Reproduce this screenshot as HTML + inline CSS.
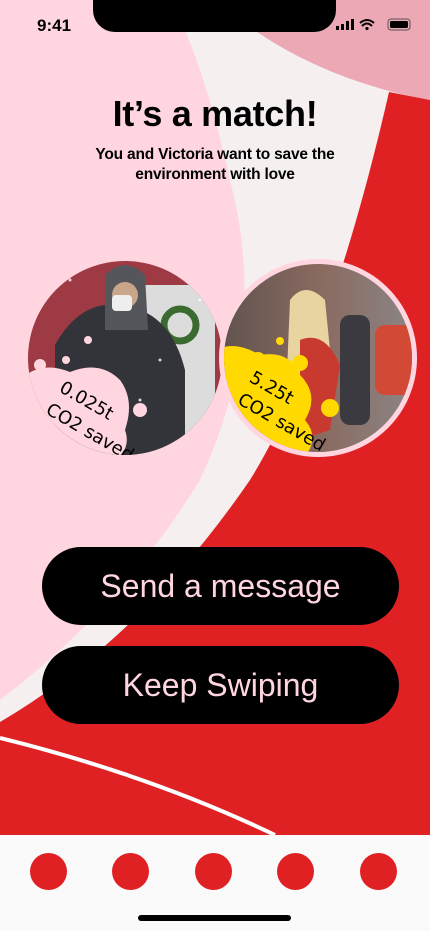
<!DOCTYPE html>
<html><head><meta charset="utf-8"><style>
*{margin:0;padding:0;box-sizing:border-box}
body{width:430px;height:931px;overflow:hidden;position:relative;background:#ffd6e0;font-family:"Liberation Sans",sans-serif}
.abs{position:absolute}
h1{position:absolute;top:93px;width:430px;text-align:center;font-size:36px;font-weight:bold;letter-spacing:-0.3px;color:#000}
.sub{position:absolute;top:145px;width:430px;text-align:center;font-size:15.5px;line-height:20px;color:#000;font-weight:bold;letter-spacing:-0.2px}
.btn{position:absolute;left:42px;width:357px;height:78px;border-radius:39px;background:#000;color:#ffd6e0;font-size:32px;text-align:center;line-height:78px}
.dot{position:absolute;top:853px;width:37px;height:37px;border-radius:50%;background:#e02124}
</style></head><body>
<svg class="abs" style="left:0;top:0" width="430" height="931">
<path d="M185 0 L430 0 L430 931 L0 931 L0 700 Q120 610 200 480 Q270 330 230 180 Q210 90 185 30 Z" fill="#f5f0ef"/>
<path d="M240 20 Q320 80 430 100 L430 0 L240 0 Z" fill="#eda8b5"/>
<path d="M389 92 L430 100 L430 931 L0 931 L0 722 Q140 640 250 480 Q330 350 389 92 Z" fill="#e02124"/>
<path d="M0 738 Q150 775 275 835" stroke="#fff" stroke-width="4" fill="none"/>
<defs>
<linearGradient id="g2" x1="0" x2="1"><stop offset="0" stop-color="#5b504c"/><stop offset="0.5" stop-color="#8a6a60"/><stop offset="1" stop-color="#8a8a8c"/></linearGradient>
<clipPath id="c1"><circle cx="125" cy="358" r="97"/></clipPath>
<clipPath id="c2"><circle cx="318" cy="358" r="94"/></clipPath>
</defs>
<circle cx="125" cy="358" r="102" fill="#ffd6e0"/>
<g clip-path="url(#c1)"><rect x="0" y="250" width="250" height="220" fill="#9e3a44"/>
<rect x="145" y="285" width="70" height="170" fill="#dcdcdc"/>
<circle cx="180" cy="325" r="16" fill="none" stroke="#3a6a30" stroke-width="7"/>
<path d="M55 345 Q80 300 120 305 Q170 310 185 370 L185 460 L55 460 Z" fill="#33343a"/>
<path d="M105 275 Q125 255 145 275 L148 330 L105 330 Z" fill="#55565c"/>
<circle cx="125" cy="295" r="13" fill="#c9a58a"/>
<rect x="112" y="295" width="20" height="16" rx="4" fill="#eee"/>
<g fill="#fff" opacity="0.8"><circle cx="40" cy="300" r="1.5"/><circle cx="70" cy="280" r="1.5"/><circle cx="90" cy="340" r="1.5"/><circle cx="160" cy="360" r="1.5"/><circle cx="200" cy="300" r="1.5"/><circle cx="140" cy="400" r="1.5"/></g>
<path d="M20 380 Q40 360 70 372 Q100 360 120 380 Q135 400 125 430 Q132 450 112 462 L20 462 Z" fill="#ffd6e0"/>
<circle cx="40" cy="365" r="6" fill="#ffd6e0"/><circle cx="66" cy="360" r="4" fill="#ffd6e0"/><circle cx="140" cy="410" r="7" fill="#ffd6e0"/><circle cx="88" cy="340" r="4" fill="#ffd6e0"/>
<text x="58" y="392" font-size="18" transform="rotate(30 60 392)" font-family="DejaVu Sans">0.025t</text>
<text x="44" y="416" font-size="18" transform="rotate(30 50 416)" font-family="DejaVu Sans">CO2 saved</text>
</g>
<circle cx="318" cy="358" r="99" fill="#ffd6e0"/>
<g clip-path="url(#c2)"><rect x="210" y="250" width="220" height="220" fill="url(#g2)"/>
<rect x="375" y="325" width="40" height="70" rx="10" fill="#d24a35"/>
<rect x="340" y="315" width="30" height="110" rx="10" fill="#3a3a40"/>
<path d="M290 300 Q305 280 325 300 L335 400 L285 420 Z" fill="#e8d4a0"/>
<path d="M300 340 Q325 330 340 365 L330 430 L300 440 Z" fill="#c83a30"/>
<path d="M215 350 Q235 340 260 355 Q290 350 300 375 Q320 395 305 420 Q322 440 300 462 L215 462 Z" fill="#ffd900"/>
<circle cx="258" cy="360" r="8" fill="#ffd900"/><circle cx="300" cy="363" r="8" fill="#ffd900"/><circle cx="280" cy="341" r="4" fill="#ffd900"/><circle cx="330" cy="408" r="9" fill="#ffd900"/>
<text x="248" y="382" font-size="18" transform="rotate(30 250 382)" font-family="DejaVu Sans">5.25t</text>
<text x="236" y="405" font-size="18" transform="rotate(30 240 405)" font-family="DejaVu Sans">CO2 saved</text>
</g>
</svg>
<div class="abs" style="left:93px;top:0;width:243px;height:32px;background:#000;border-radius:0 0 22px 22px"></div>
<div class="abs" style="left:37px;top:16px;font-size:17px;font-weight:bold">9:41</div>
<svg class="abs" style="left:336px;top:18px" width="78" height="14">
<rect x="0" y="8" width="3" height="4" fill="#000"/><rect x="5" y="6" width="3" height="6" fill="#000"/><rect x="10" y="3" width="3" height="9" fill="#000"/><rect x="15" y="1" width="3" height="11" fill="#000"/>
<path d="M24 5 Q31 -1 38 5 M26 8 Q31 3 36 8" stroke="#000" stroke-width="2" fill="none"/><circle cx="31" cy="10.5" r="1.6" fill="#000"/>
<rect x="52" y="1" width="22" height="11" rx="3" fill="none" stroke="#555" stroke-width="1"/><rect x="54" y="3" width="18" height="7" rx="1.5" fill="#000"/>
</svg>
<h1>It’s a match!</h1>
<div class="sub">You and Victoria want to save the<br>environment with love</div>
<div class="btn" style="top:547px">Send a message</div>
<div class="btn" style="top:646px">Keep Swiping</div>
<div class="abs" style="left:0;top:835px;width:430px;height:96px;background:#fafafa"></div>
<div class="dot" style="left:30px"></div><div class="dot" style="left:112px"></div><div class="dot" style="left:195px"></div><div class="dot" style="left:277px"></div><div class="dot" style="left:360px"></div>
<div class="abs" style="left:138px;top:915px;width:153px;height:6px;border-radius:3px;background:#000"></div>
</body></html>
